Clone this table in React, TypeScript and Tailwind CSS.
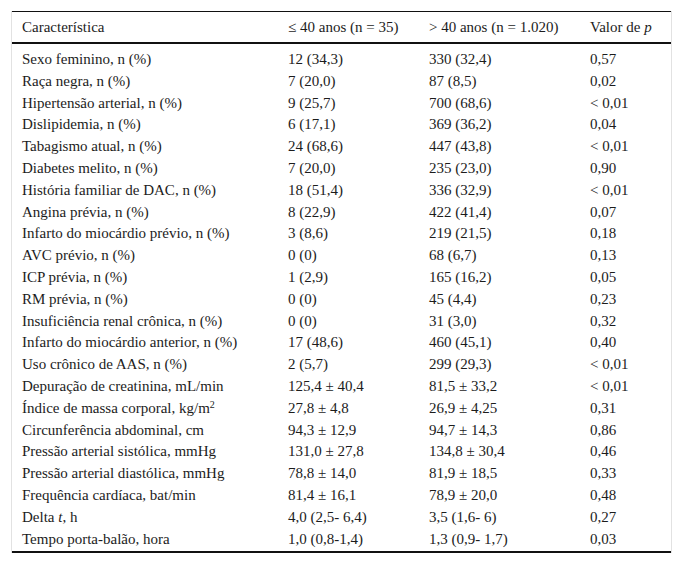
const rows: [React.ReactNode, string, string, string][] = [
  ["Sexo feminino, n (%)", "12 (34,3)", "330 (32,4)", "0,57"],
  ["Raça negra, n (%)", "7 (20,0)", "87 (8,5)", "0,02"],
  ["Hipertensão arterial, n (%)", "9 (25,7)", "700 (68,6)", "< 0,01"],
  ["Dislipidemia, n (%)", "6 (17,1)", "369 (36,2)", "0,04"],
  ["Tabagismo atual, n (%)", "24 (68,6)", "447 (43,8)", "< 0,01"],
  ["Diabetes melito, n (%)", "7 (20,0)", "235 (23,0)", "0,90"],
  ["História familiar de DAC, n (%)", "18 (51,4)", "336 (32,9)", "< 0,01"],
  ["Angina prévia, n (%)", "8 (22,9)", "422 (41,4)", "0,07"],
  ["Infarto do miocárdio prévio, n (%)", "3 (8,6)", "219 (21,5)", "0,18"],
  ["AVC prévio, n (%)", "0 (0)", "68 (6,7)", "0,13"],
  ["ICP prévia, n (%)", "1 (2,9)", "165 (16,2)", "0,05"],
  ["RM prévia, n (%)", "0 (0)", "45 (4,4)", "0,23"],
  ["Insuficiência renal crônica, n (%)", "0 (0)", "31 (3,0)", "0,32"],
  ["Infarto do miocárdio anterior, n (%)", "17 (48,6)", "460 (45,1)", "0,40"],
  ["Uso crônico de AAS, n (%)", "2 (5,7)", "299 (29,3)", "< 0,01"],
  ["Depuração de creatinina, mL/min", "125,4 ± 40,4", "81,5 ± 33,2", "< 0,01"],
  [
    <>
      Índice de massa corporal, kg/m<sup className="text-[10px]">2</sup>
    </>,
    "27,8 ± 4,8",
    "26,9 ± 4,25",
    "0,31",
  ],
  ["Circunferência abdominal, cm", "94,3 ± 12,9", "94,7 ± 14,3", "0,86"],
  ["Pressão arterial sistólica, mmHg", "131,0 ± 27,8", "134,8 ± 30,4", "0,46"],
  ["Pressão arterial diastólica, mmHg", "78,8 ± 14,0", "81,9 ± 18,5", "0,33"],
  ["Frequência cardíaca, bat/min", "81,4 ± 16,1", "78,9 ± 20,0", "0,48"],
  [
    <>
      Delta <i>t</i>, h
    </>,
    "4,0 (2,5- 6,4)",
    "3,5 (1,6- 6)",
    "0,27",
  ],
  ["Tempo porta-balão, hora", "1,0 (0,8-1,4)", "1,3 (0,9- 1,7)", "0,03"],
];

const head = "border-t border-b-2 border-[#111] pl-[10px] pt-[7px] pb-[7px] text-left align-top font-normal leading-[16px]";

export default function App() {
  return (
    <div className="min-h-[567px] w-[683px] bg-white pl-[11px] pt-[11px] [font-family:'Liberation_Serif',serif] text-[15px] text-[#1c1c1c]">
      <table className="w-[661px] table-fixed border-separate border-spacing-0 border-x border-x-[#e2e2e2]">
        <colgroup>
          <col className="w-[266px]" />
          <col className="w-[141px]" />
          <col className="w-[161px]" />
          <col className="w-[91px]" />
        </colgroup>
        <thead>
          <tr>
            <th className={head}>Característica</th>
            <th className={head}>≤ 40 anos (n = 35)</th>
            <th className={head}>&gt; 40 anos (n = 1.020)</th>
            <th className={head}>
              Valor de <i>p</i>
            </th>
          </tr>
        </thead>
        <tbody>
          {rows.map((r, i) => {
            const first = i === 0;
            const last = i === rows.length - 1;
            const cell = last
              ? "border-b-2 border-[#111] pl-[10px] align-top leading-[16px]"
              : first
                ? "pl-[10px] pt-[7px] align-top leading-[16px]"
                : "pl-[10px] align-top leading-[16px]";
            return (
              <tr key={i} className={first ? "h-[28.9px]" : last ? "h-[22.5px]" : "h-[21.8px]"}>
                <td className={cell}>{r[0]}</td>
                <td className={cell}>{r[1]}</td>
                <td className={cell}>{r[2]}</td>
                <td className={cell}>{r[3]}</td>
              </tr>
            );
          })}
        </tbody>
      </table>
    </div>
  );
}
